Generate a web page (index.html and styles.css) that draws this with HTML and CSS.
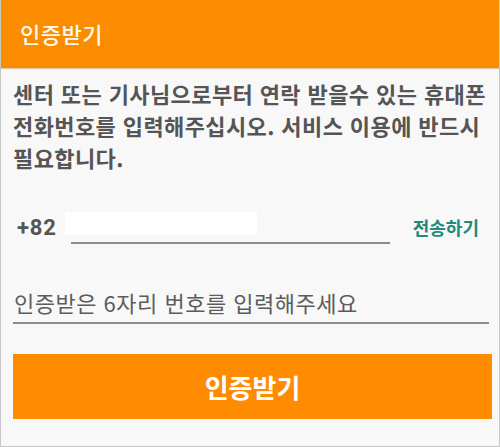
FILE: index.html
```html
<!DOCTYPE html>
<html lang="ko">
<head>
  <meta charset="UTF-8">
  <title>인증받기</title>
  <meta name="viewport" content="width=device-width, initial-scale=1">
  <link rel="stylesheet" href="styles.css">
</head>
<body>
  <div class="page">
    <div class="header">인증받기</div>
    <div class="content">
      <p class="desc">센터 또는 기사님으로부터 연락 받을수 있는 휴대폰 전화번호를 입력해주십시오. 서비스 이용에 반드시 필요합니다.</p>
      <div class="phone-row">
        <span class="code">+82</span>
        <div class="phone-field">
          <span class="phone-box"></span>
        </div>
        <button class="send">전송하기</button>
      </div>
      <div class="auth-field">
        <input type="text" placeholder="인증받은 6자리 번호를 입력해주세요">
      </div>
      <button class="submit">인증받기</button>
    </div>
  </div>
</body>
</html>
```

FILE: styles.css
```css
html, body { margin: 0; padding: 0; }
body { font-family: "Noto Sans CJK KR", "Noto Sans", sans-serif; background: #f8f8f8; }
.page { width: 500px; height: 447px; box-sizing: border-box; border: 1px solid #c6c6c6; border-top: none; background: #f8f8f8; }
.header { height: 68px; background: #fb8c00; color: #fff8ee; font-size: 22px; font-weight: 500; letter-spacing: 0.5px; line-height: 66px; padding-left: 19px; box-shadow: 0 1px 1px #e0c9a8; }
.content { padding: 0 9px 0 12px; }
.desc { margin: 0; padding-top: 9px; font-size: 22px; font-weight: 700; line-height: 32px; color: #555; letter-spacing: 0.4px; }
.phone-row { display: flex; align-items: center; margin-top: 31px; height: 40px; }
.code { font-family: Roboto, "Noto Sans", sans-serif; font-size: 22px; font-weight: 700; color: #555; letter-spacing: 0.8px; padding-left: 4px; width: 54px; margin-top: 6px; }
.phone-field { position: relative; width: 319px; height: 40px; border-bottom: 2px solid #8c8c8c; box-sizing: border-box; }
.phone-box { position: absolute; left: -6px; top: 8px; width: 192px; height: 23px; background: #fff; }
.send { margin-left: auto; margin-right: 11px; margin-top: 6px; background: none; border: none; padding: 0; font-family: inherit; font-size: 18px; font-weight: 700; color: #218a7b; cursor: pointer; }
.auth-field { margin-top: 42px; margin-right: 1px; }
.auth-field input { display: block; width: 100%; height: 38px; box-sizing: border-box; border: none; border-bottom: 2px solid #8c8c8c; background: none; padding: 0 0 4px 1px; line-height: 32px; font-family: inherit; font-size: 22px; letter-spacing: 0.5px; color: #555; outline: none; }
.auth-field input::placeholder { color: #5c5c5c; }
.submit { display: block; width: calc(100% + 2px); height: 65px; margin-top: 30px; border: none; background: #ff8c00; color: #fff; font-family: inherit; font-size: 26px; font-weight: 700; cursor: pointer; }
```
